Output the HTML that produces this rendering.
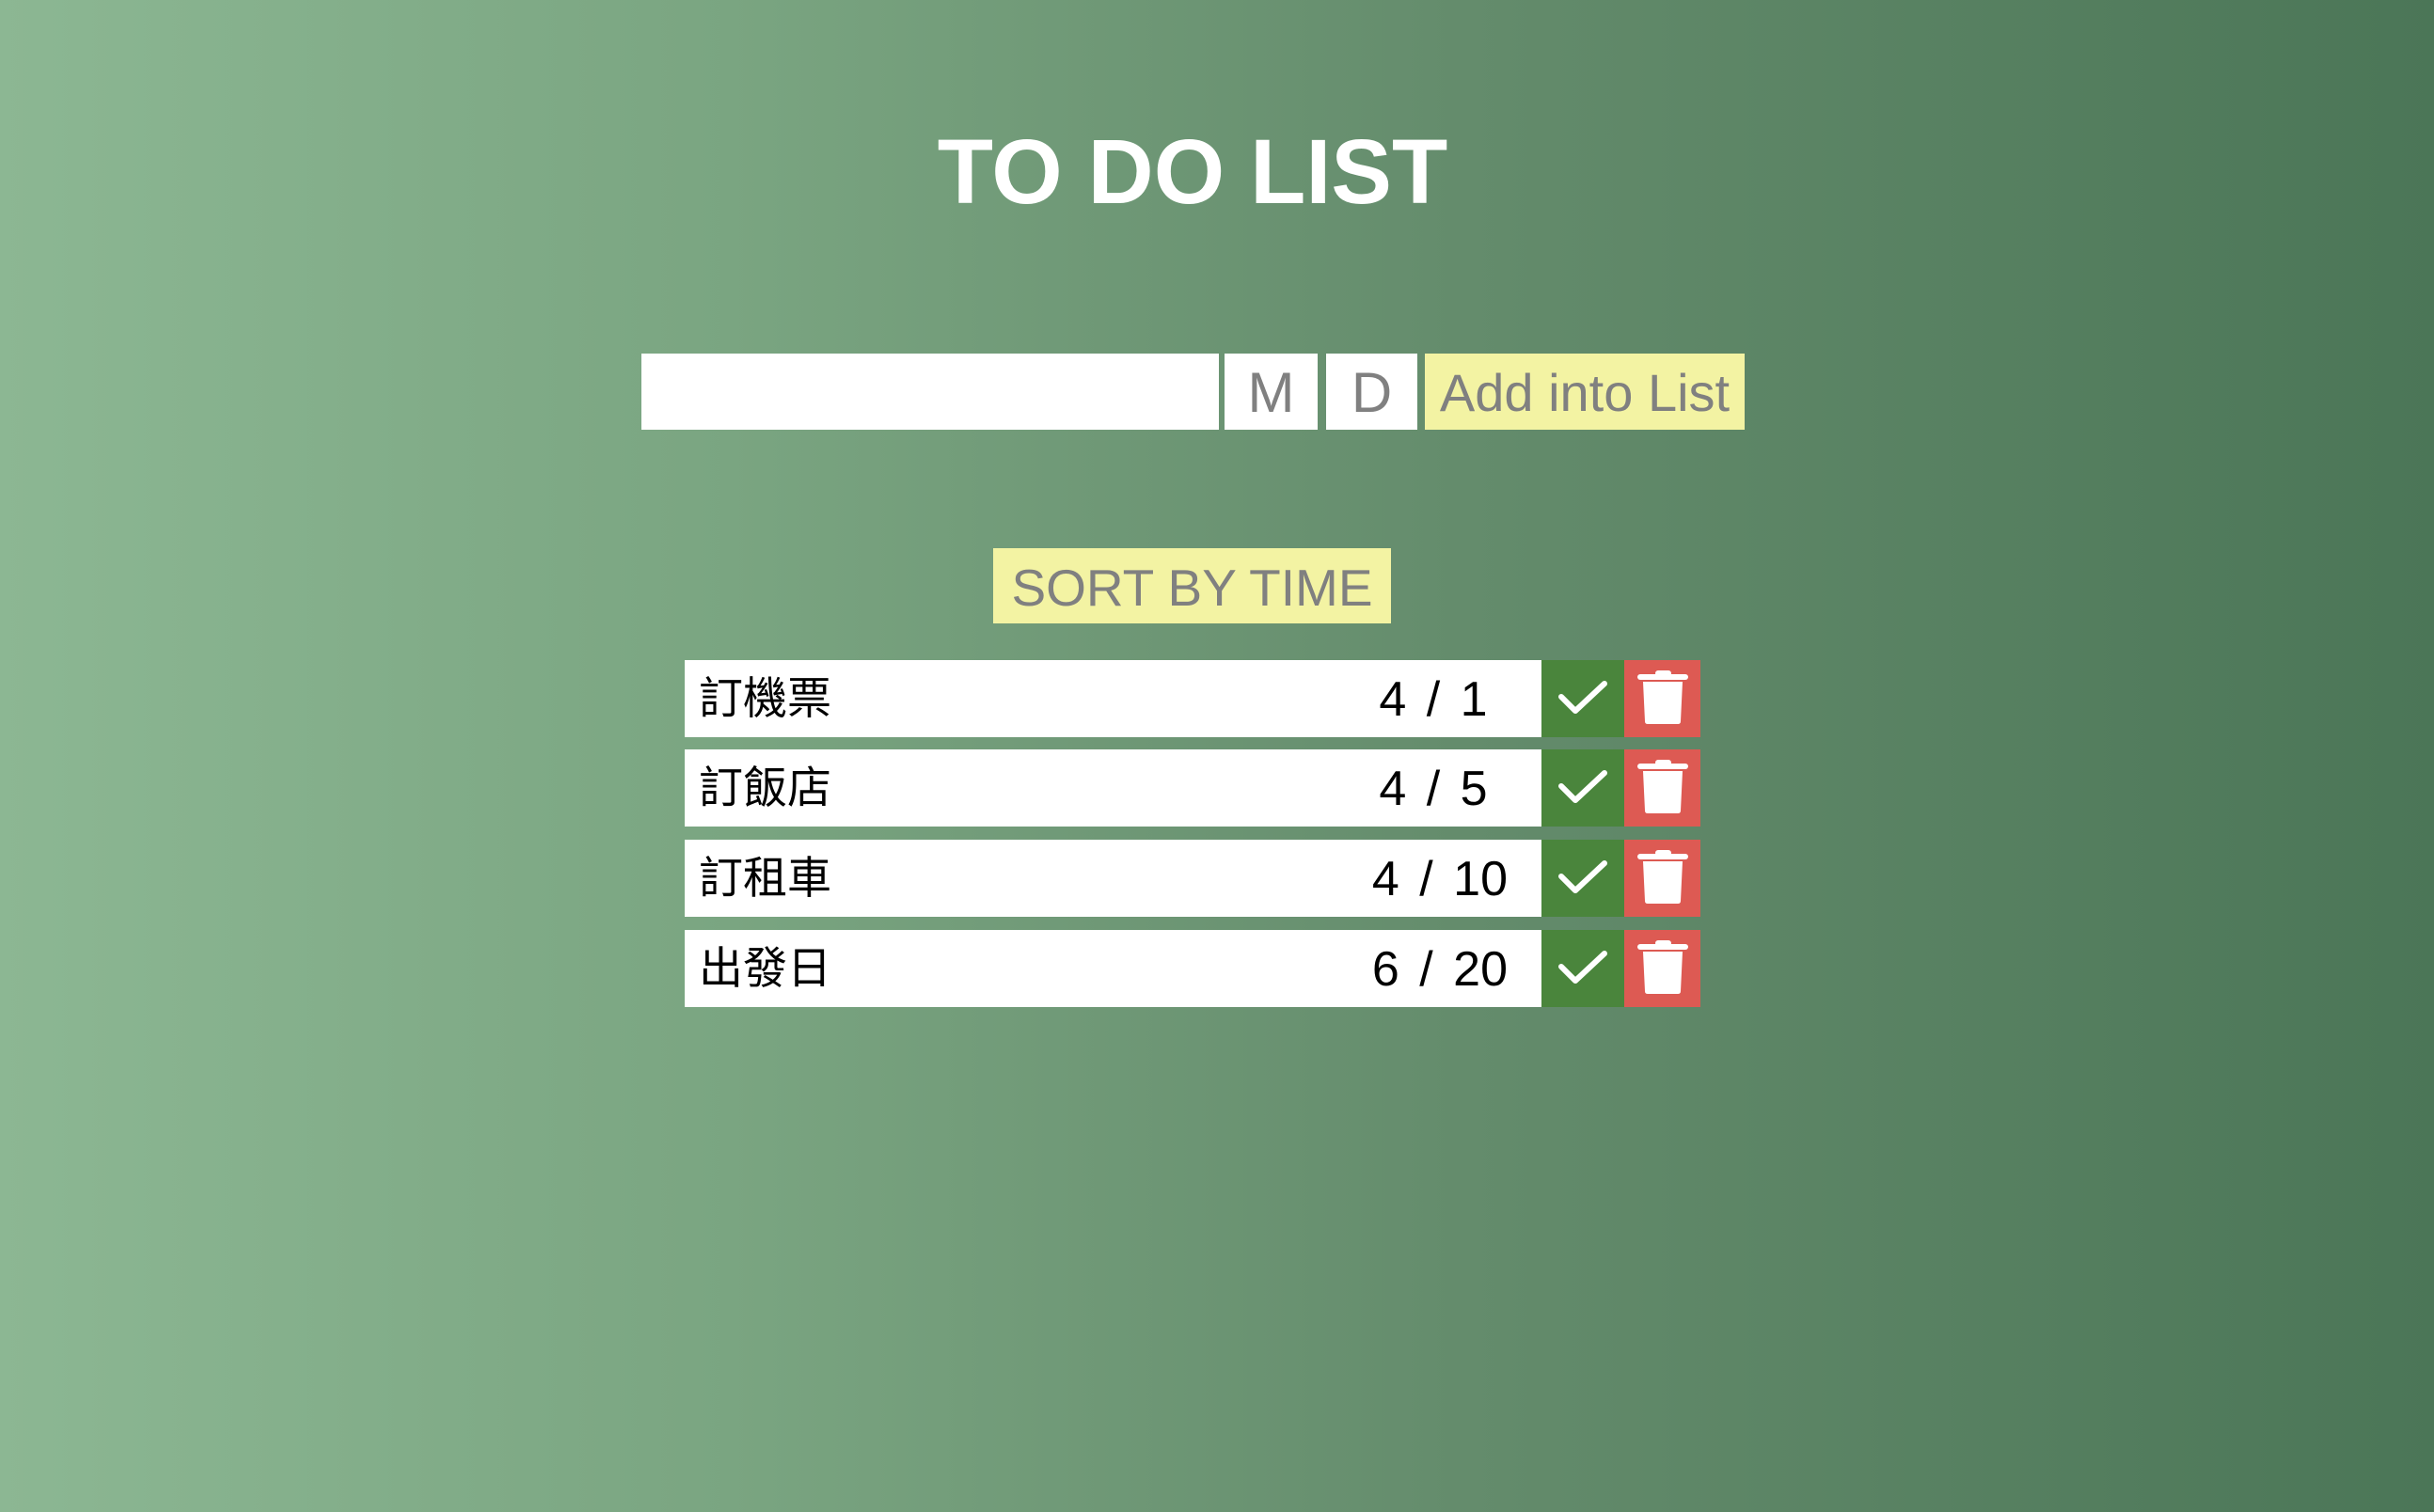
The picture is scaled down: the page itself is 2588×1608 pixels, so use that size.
<!DOCTYPE html>
<html><head><meta charset="utf-8"><style>
html,body{margin:0;padding:0;}
body{width:2588px;height:1608px;overflow:hidden;position:relative;background:linear-gradient(to right,#8cb793 0%,#7aa581 30%,#648c6c 60%,#4b7657 100%);font-family:"Liberation Sans",Arial,sans-serif;}
.a{position:absolute;box-sizing:border-box;}
h1{position:absolute;margin:0;left:900px;width:736px;text-align:center;top:128px;font-size:97px;line-height:110px;color:#fff;font-weight:bold;}
.w{background:#fff;}
.y{background:#f3f3a3;}
.btn{color:#808080;font-size:60px;text-align:center;}
.row{position:absolute;left:728px;width:1080px;height:82px;}
.row .t{position:absolute;left:0;top:0;width:911px;height:82px;background:#fff;}
.row .n{position:absolute;left:15px;top:0;line-height:82px;font-size:47px;color:#000;font-family:"Liberation Sans","Noto Sans CJK TC",sans-serif;}
.row .d{position:absolute;right:205px;top:0;line-height:84px;font-size:52px;color:#000;white-space:nowrap;word-spacing:7px;}
.row .g{position:absolute;left:911px;top:0;width:88px;height:82px;background:#4a853c;}
.row .r{position:absolute;left:999px;top:0;width:81px;height:82px;background:#dd5a53;}
</style></head><body>
<h1>TO DO LIST</h1>
<div class="a w" style="left:682px;top:376px;width:614px;height:81px;"></div>
<div class="a w btn" style="left:1302px;top:376px;width:99px;height:81px;line-height:84px;">M</div>
<div class="a w btn" style="left:1410px;top:376px;width:97px;height:81px;line-height:84px;">D</div>
<div class="a y btn" style="left:1515px;top:376px;width:340px;height:81px;line-height:84px;font-size:56px;">Add into List</div>
<div class="a y btn" style="left:1056px;top:583px;width:423px;height:80px;line-height:84px;font-size:55px;">SORT BY TIME</div>

<div class="row" style="top:702px"><div class="t"></div><div class="n">訂機票</div><div class="d">4 / 1&nbsp;</div><div class="g"><svg width="88" height="82"><path d="M21 39 L36 54 L67 25" stroke="#fff" stroke-width="6" fill="none" stroke-linecap="round" stroke-linejoin="round"/></svg></div><div class="r"><svg width="81" height="82"><path d="M17 18 H65" stroke="#fff" stroke-width="6" stroke-linecap="round"/><rect x="33" y="11" width="17" height="6" rx="3" fill="#fff"/><path d="M20 23 H62 L60 65 Q60 68 57 68 H25 Q22 68 22 65 Z" fill="#fff"/></svg></div></div>

<div class="row" style="top:797px"><div class="t"></div><div class="n">訂飯店</div><div class="d">4 / 5&nbsp;</div><div class="g"><svg width="88" height="82"><path d="M21 39 L36 54 L67 25" stroke="#fff" stroke-width="6" fill="none" stroke-linecap="round" stroke-linejoin="round"/></svg></div><div class="r"><svg width="81" height="82"><path d="M17 18 H65" stroke="#fff" stroke-width="6" stroke-linecap="round"/><rect x="33" y="11" width="17" height="6" rx="3" fill="#fff"/><path d="M20 23 H62 L60 65 Q60 68 57 68 H25 Q22 68 22 65 Z" fill="#fff"/></svg></div></div>

<div class="row" style="top:893px"><div class="t"></div><div class="n">訂租車</div><div class="d">4 / 10</div><div class="g"><svg width="88" height="82"><path d="M21 39 L36 54 L67 25" stroke="#fff" stroke-width="6" fill="none" stroke-linecap="round" stroke-linejoin="round"/></svg></div><div class="r"><svg width="81" height="82"><path d="M17 18 H65" stroke="#fff" stroke-width="6" stroke-linecap="round"/><rect x="33" y="11" width="17" height="6" rx="3" fill="#fff"/><path d="M20 23 H62 L60 65 Q60 68 57 68 H25 Q22 68 22 65 Z" fill="#fff"/></svg></div></div>

<div class="row" style="top:989px"><div class="t"></div><div class="n">出發日</div><div class="d">6 / 20</div><div class="g"><svg width="88" height="82"><path d="M21 39 L36 54 L67 25" stroke="#fff" stroke-width="6" fill="none" stroke-linecap="round" stroke-linejoin="round"/></svg></div><div class="r"><svg width="81" height="82"><path d="M17 18 H65" stroke="#fff" stroke-width="6" stroke-linecap="round"/><rect x="33" y="11" width="17" height="6" rx="3" fill="#fff"/><path d="M20 23 H62 L60 65 Q60 68 57 68 H25 Q22 68 22 65 Z" fill="#fff"/></svg></div></div>
</body></html>
